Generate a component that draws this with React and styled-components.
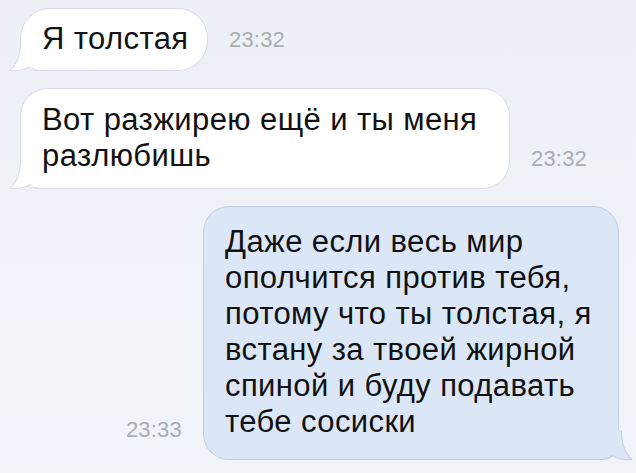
import React from "react";
import styled, { createGlobalStyle } from "styled-components";

const Global = createGlobalStyle`
  html, body { margin: 0; padding: 0; }
  body {
    width: 636px;
    height: 473px;
    overflow: hidden;
    background: linear-gradient(180deg, #edf1f7 0%, #f1f4f9 100%);
    font-family: "Liberation Sans", Arial, sans-serif;
  }
`;

const Chat = styled.div`
  display: flex;
  flex-direction: column;
  padding: 8px 17px 0 20px;
  width: 636px;
  box-sizing: border-box;
`;

const Row = styled.div`
  display: flex;
  align-items: ${(p) => p.$align || "flex-end"};
  justify-content: ${(p) => (p.$out ? "flex-end" : "flex-start")};
  margin-top: ${(p) => p.$mt || 0}px;
  gap: 21px;
`;

const Bubble = styled.div`
  position: relative;
  box-sizing: border-box;
  width: ${(p) => p.$w}px;
  padding: ${(p) => p.$pad};
  background: ${(p) => (p.$out ? "#dbe7f7" : "#ffffff")};
  border: 1px solid ${(p) => (p.$out ? "#c3cfde" : "#d8dce2")};
  border-radius: ${(p) => p.$r}px;
  border-bottom-left-radius: ${(p) => (p.$out ? p.$r : 16)}px;
  border-bottom-right-radius: ${(p) => (p.$out ? 16 : p.$r)}px;
  color: #111;
  font-size: 31px;
  letter-spacing: 0.4px;
  line-height: 36px;
  white-space: nowrap;
`;

const Text = styled.span`
  position: relative;
  z-index: 1;
`;

const Time = styled.div`
  font-family: "Liberation Sans", Arial, sans-serif;
  font-size: 22px;
  line-height: 22px;
  color: #a9adb4;
  letter-spacing: 0.2px;
  margin-bottom: ${(p) => p.$mb || 0}px;
`;

const TailSvg = styled.svg`
  position: absolute;
  bottom: -1px;
  ${(p) => (p.$out ? "right: -15px; transform: scaleX(-1);" : "left: -12px;")}
  width: 34px;
  height: 30px;
  overflow: visible;
`;

function Tail({ out }) {
  const fill = out ? "#dbe7f7" : "#ffffff";
  const stroke = out ? "#c3cfde" : "#d8dce2";
  const outline =
    "M 11.5 0 C 11.5 13 9 22 1 29.5 C 9 30.5 16 28.5 21 25.5 C 24 28 28 29.5 34 29.5";
  return (
    <TailSvg $out={out} viewBox="0 0 34 30">
      <path d={outline + " L 34 0 Z"} fill={fill} stroke="none" />
      <path d={outline} fill="none" stroke={stroke} strokeWidth="1" />
    </TailSvg>
  );
}

export default function App() {
  return (
    <>
      <Global />
      <Chat>
        <Row $align="center">
          <Bubble $w={188} $r={30} $pad="12px 18px 13px 21px">
            <Tail />
            <Text>Я толстая</Text>
          </Bubble>
          <Time>23:32</Time>
        </Row>
        <Row $mt={17}>
          <Bubble $w={490} $r={28} $pad="13px 18px 14px 21px">
            <Tail />
            <Text>
              Вот разжирею ещё и ты меня
              <br />
              разлюбишь
            </Text>
          </Bubble>
          <Time $mb={19}>23:32</Time>
        </Row>
        <Row $out $mt={17}>
          <Time $mb={19}>23:33</Time>
          <Bubble $out $w={416} $r={26} $pad="17px 16px 19px 21px">
            <Tail out />
            <Text>
              Даже если весь мир
              <br />
              ополчится против тебя,
              <br />
              потому что ты толстая, я
              <br />
              встану за твоей жирной
              <br />
              спиной и буду подавать
              <br />
              тебе сосиски
            </Text>
          </Bubble>
        </Row>
      </Chat>
    </>
  );
}
